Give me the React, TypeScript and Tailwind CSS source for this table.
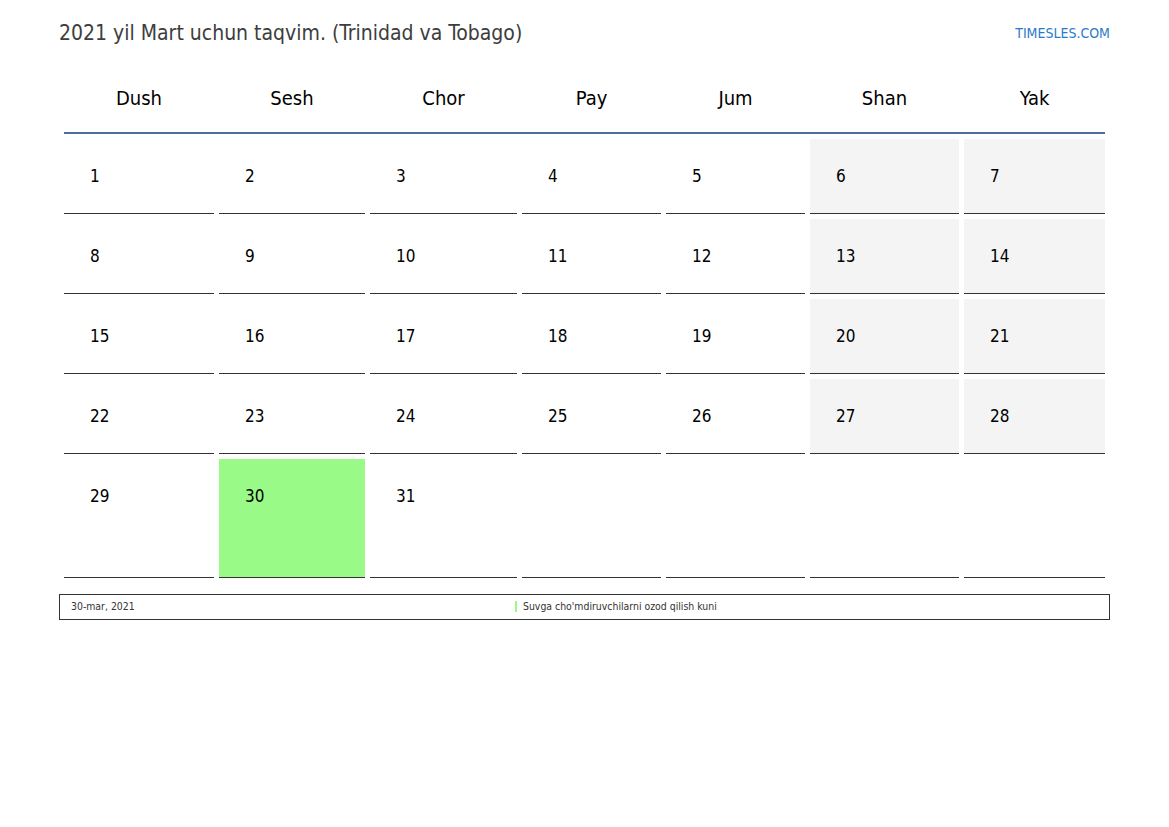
import React from "react";

const days = ["Dush", "Sesh", "Chor", "Pay", "Jum", "Shan", "Yak"];
const widths = ["w-[150px]", "w-[146px]", "w-[147px]", "w-[139px]", "w-[139px]", "w-[149px]", "w-[141px]"];

const weeks: (number | null)[][] = [
    [1, 2, 3, 4, 5, 6, 7],
    [8, 9, 10, 11, 12, 13, 14],
    [15, 16, 17, 18, 19, 20, 21],
    [22, 23, 24, 25, 26, 27, 28],
    [29, 30, 31, null, null, null, null],
];

function DayCell({ day, col, tall }: { day: number | null; col: number; tall: boolean }) {
    const weekend = col >= 5 && day !== null;
    const holiday = day === 30;
    let bg = "bg-white";
    if (weekend) bg = "bg-[#f4f4f4]";
    if (holiday) bg = "bg-[#9afa88]";
    return <div className={`${widths[col]} flex flex-col`}>
        <div className={`${bg} ${tall ? "h-[118px]" : "h-[74px]"} pl-[26px] pt-[25px] text-[17px] leading-[24px] text-black`}>
            {day}
        </div>
        <div className="h-px bg-[#333]"></div>
    </div>
}

export default function App() {
    return <div className="w-[1169px] h-[827px] bg-white" style={{ fontFamily: '"DejaVu Sans Condensed", "DejaVu Sans", "Liberation Sans", sans-serif' }}>
        <div className="ml-[59px] w-[1051px] pt-[21px]">
            <div className="flex justify-between items-center h-[24px]">
                <div className="text-[21px] leading-[24px] text-[#3d3d3d]">2021 yil Mart uchun taqvim. (Trinidad va Tobago)</div>
                <div className="text-[14px] leading-[24px] text-[#2b7bcb]">TIMESLES.COM</div>
            </div>

            <div className="mx-[5px]">
                <div className="flex gap-[5px] border-b-2 border-[#4d6e9b]">
                    {days.map((d, i) => (
                        <div key={d} className={`${widths[i]} h-[87px] pt-[41px] text-center text-[20px] leading-[24px] text-black`}>
                            {d}
                        </div>
                    ))}
                </div>

                <div className="flex flex-col gap-[5px] mt-[5px]">
                    {weeks.map((week, wi) => (
                        <div key={wi} className="flex gap-[5px]">
                            {week.map((day, ci) => (
                                <DayCell key={ci} day={day} col={ci} tall={wi === 4} />
                            ))}
                        </div>
                    ))}
                </div>
            </div>

            <div className="mt-[16px] h-[26px] border border-[#333] flex items-center text-[10.4px] text-[#333]">
                <div className="w-[455px] pl-[11px]">30-mar, 2021</div>
                <div className="flex items-center gap-[6px]">
                    <span className="w-[2px] h-[11px] bg-[#9afa88]"></span>
                    <span>Suvga cho'mdiruvchilarni ozod qilish kuni</span>
                </div>
            </div>
        </div>
    </div>
}
